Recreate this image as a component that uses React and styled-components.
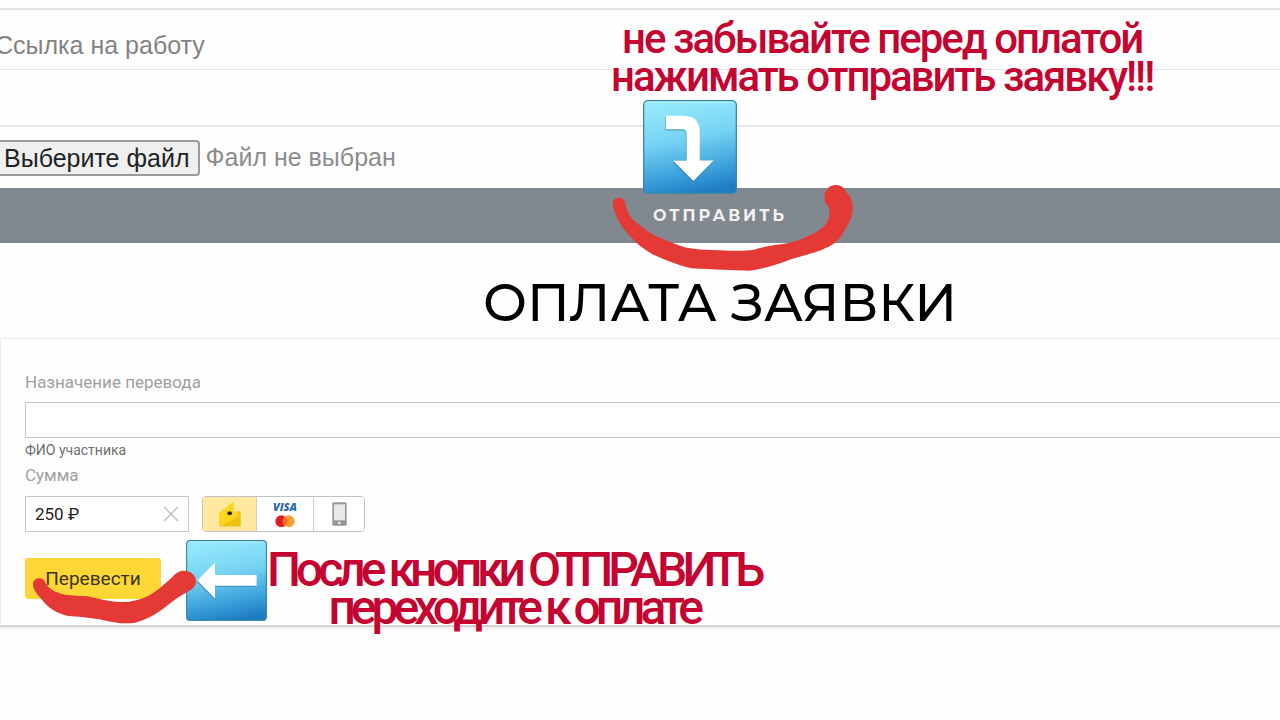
import React, { useState } from "react";
import styled, { createGlobalStyle } from "styled-components";

const GlobalStyle = createGlobalStyle`
  * {
    box-sizing: border-box;
  }

  body {
    margin: 0;
    background-color: #fefefe;
    font-family: "Liberation Sans", Arial, sans-serif;
    overflow-x: hidden;
  }
`;

const Page = styled.div`
  position: relative;
  overflow: hidden;
  padding: 8px 0 32px;
`;

// The form runs past the right edge of the window
const Wide = styled.main`
  width: calc(100% + 160px);
`;

const RequestForm = styled.form`
  display: flex;
  flex-direction: column;
`;

const LinkInput = styled.input`
  width: 100%;
  height: 62px;
  margin: 0 0 55px -5px;
  padding: 12px 0 0;
  border: solid #e4e4e4;
  border-width: 2px 0 1px;
  background-color: transparent;
  font-family: inherit;
  font-size: 25px;
  outline: none;

  &::placeholder {
    color: #838383;
    opacity: 1;
  }
`;

const FileLabel = styled.label`
  display: flex;
  align-items: center;
  gap: 6px;
  height: 63px;
  margin-left: -5px;
  border-top: 2px solid #e8e8e8;
  font-size: 25px;
  color: #8c8c8c;
  cursor: pointer;
`;

const FileInput = styled.input`
  width: 1px;
  height: 1px;
  margin: 0 -8px 0 0;
  opacity: 0;
`;

const FileButton = styled.span`
  padding: 0 8px;
  border: 2px solid #9a9a9a;
  border-radius: 4px;
  background-color: #efefef;
  color: #222222;
  line-height: 32px;
`;

const SubmitButton = styled.button`
  height: 55px;
  border: none;
  background-color: #81888f;
  color: #f2f2f2;
  font-family: Montserrat, Inter, sans-serif;
  font-size: 16px;
  font-weight: 700;
  letter-spacing: 3px;
  cursor: pointer;
`;

const Title = styled.h1`
  margin: 0;
  padding: 28px 0 4px;
  font-family: Montserrat, Inter, sans-serif;
  font-size: 52px;
  font-weight: 500;
  line-height: 63px;
  text-align: center;
  color: #000000;
`;

const PaymentForm = styled.form`
  display: flex;
  flex-direction: column;
  padding: 31px 24px 26px;
  border: 1px solid #ececec;
  border-bottom: 2px solid #d4d4d4;
  box-shadow: 0 2px 3px rgba(0, 0, 0, 0.08);
`;

const FieldLabel = styled.label`
  font-family: Roboto, sans-serif;
  font-size: 17px;
  line-height: 24px;
  color: #a0a0a0;
`;

const PurposeInput = styled.input`
  width: 100%;
  height: 36px;
  margin-top: 8px;
  padding: 0 10px;
  border: 1px solid #c6c6c6;
  background-color: #ffffff;
  font-size: 16px;
`;

const Hint = styled.span`
  font-family: Roboto, sans-serif;
  font-size: 14px;
  line-height: 25px;
  color: #6e6e6e;
`;

const AmountRow = styled.div`
  display: flex;
  gap: 13px;
  margin-top: 9px;
`;

const AmountBox = styled.div`
  display: flex;
  align-items: center;
  width: 164px;
  height: 36px;
  padding: 0 9px;
  border: 1px solid #c6c6c6;
  background-color: #ffffff;
`;

const AmountInput = styled.input`
  flex: 1;
  min-width: 0;
  padding: 0;
  border: none;
  outline: none;
  background: none;
  font-family: Roboto, "DejaVu Sans", sans-serif;
  font-size: 17px;
  color: #222222;
`;

const ClearButton = styled.button`
  display: flex;
  padding: 0;
  border: none;
  background: none;
  cursor: pointer;
`;

const Methods = styled.div`
  display: flex;
  height: 36px;
  border: 1px solid #c2c2c2;
  border-radius: 4px;
  overflow: hidden;
`;

const MethodButton = styled.button`
  display: flex;
  align-items: center;
  justify-content: center;
  width: ${props => props.$width};
  padding: 0;
  border: none;
  border-left: ${props => (props.$first ? "none" : "1px solid #cfcfcf")};
  background-color: ${props => (props.$active ? "#ffe9a0" : "#ffffff")};
  cursor: pointer;
`;

const CardBrands = styled.span`
  display: flex;
  flex-direction: column;
  align-items: center;
  gap: 2px;
`;

const Visa = styled.span`
  font-family: "Open Sans", sans-serif;
  font-size: 11px;
  font-style: italic;
  font-weight: 800;
  line-height: 12px;
  color: #2c6ba8;
`;

const PayButton = styled.button`
  width: 136px;
  height: 41px;
  margin-top: 26px;
  padding: 0;
  border: none;
  border-radius: 3px;
  background-color: #fdd736;
  font-family: Roboto, sans-serif;
  font-size: 19px;
  color: #3b3413;
  cursor: pointer;
`;

const Overlay = styled.div`
  position: absolute;
  left: ${props => props.$left}px;
  top: ${props => props.$top}px;
  pointer-events: none;

  svg {
    display: block;
  }
`;

const Note = styled.p`
  margin: 0;
  font-family: Roboto, sans-serif;
  font-size: ${props => props.$size}px;
  font-weight: 500;
  letter-spacing: ${props => props.$tracking}px;
  line-height: 38px;
  text-align: center;
  white-space: nowrap;
  color: #c40331;
`;

const ArrowTile = ({ size, id, d }) => (
  <svg width={size} height={size} viewBox="0 0 280 280" aria-hidden="true">
    <defs>
      <linearGradient id={id} x1="0.4" y1="0" x2="0.6" y2="1">
        <stop offset="0" stopColor="#95e9fc" />
        <stop offset="0.4" stopColor="#76d3f3" />
        <stop offset="0.75" stopColor="#3ea3dc" />
        <stop offset="1" stopColor="#1e7cc4" />
      </linearGradient>
    </defs>
    <rect x="2" y="2" width="276" height="276" rx="12" fill={`url(#${id})`} stroke="#3f87a6" strokeWidth="4" />
    <path d="M12 7H268" stroke="#c5f4fd" strokeWidth="3" />
    <path d={d} fill="#2a6f96" opacity="0.55" transform="translate(-2 4)" />
    <path d={d} fill="#ffffff" />
  </svg>
);

const WalletIcon = () => (
  <svg width="22" height="26" viewBox="0 0 66 78" aria-hidden="true">
    <path d="M2 34L44 2V31H64V76H2Z" fill="#fad02c" />
    <path d="M2 36V76H64V31L58 50L30 66Z" fill="#e9b90c" />
    <path d="M2 36L44 3V50L10 76H2Z" fill="#fcd51f" />
    <path d="M8 74L54 50L60 31H64V76Z" fill="#efc20f" />
    <ellipse cx="32" cy="37" rx="7" ry="6" fill="#2b2413" />
  </svg>
);

const CirclesIcon = () => (
  <svg width="20" height="13" viewBox="0 0 60 39" aria-hidden="true">
    <circle cx="19" cy="19" r="18" fill="#df1f26" />
    <circle cx="41" cy="19" r="18" fill="#f8a132" />
    <path d="M30 5A18 18 0 0 1 30 33A18 18 0 0 1 30 5Z" fill="#f26522" />
  </svg>
);

const PhoneIcon = () => (
  <svg width="15" height="24" viewBox="0 0 45 72" aria-hidden="true">
    <rect x="1" y="1" width="43" height="70" rx="4" fill="#969696" />
    <rect x="6" y="7" width="33" height="48" fill="#e9e9e9" />
    <circle cx="22" cy="63" r="4" fill="#f2f2f2" />
  </svg>
);

const CrossIcon = () => (
  <svg width="16" height="16" viewBox="0 0 16 16" aria-hidden="true">
    <path d="M1 1L15 15M15 1L1 15" stroke="#bdbdbd" strokeWidth="1.4" />
  </svg>
);

const App = () => {
  const [link, setLink] = useState("");
  const [fileName, setFileName] = useState("Файл не выбран");
  const [purpose, setPurpose] = useState("");
  const [amount, setAmount] = useState("250 ₽");
  const [method, setMethod] = useState("wallet");

  const handleSubmit = event => event.preventDefault();

  const handleFile = event => {
    const file = event.target.files[0];
    setFileName(file ? file.name : "Файл не выбран");
  };

  return (
    <Page>
      <GlobalStyle />
      <Wide>
        <RequestForm onSubmit={handleSubmit}>
          <LinkInput
            aria-label="Ссылка на работу"
            placeholder="Ссылка на работу"
            value={link}
            onChange={e => setLink(e.target.value)}
          />
          <FileLabel>
            <FileInput type="file" onChange={handleFile} />
            <FileButton>Выберите файл</FileButton>
            <span>{fileName}</span>
          </FileLabel>
          <SubmitButton type="submit">ОТПРАВИТЬ</SubmitButton>
        </RequestForm>

        <Title>ОПЛАТА ЗАЯВКИ</Title>

        <PaymentForm onSubmit={handleSubmit}>
          <FieldLabel htmlFor="purpose">Назначение перевода</FieldLabel>
          <PurposeInput id="purpose" value={purpose} onChange={e => setPurpose(e.target.value)} />
          <Hint>ФИО участника</Hint>
          <FieldLabel htmlFor="amount">Сумма</FieldLabel>
          <AmountRow>
            <AmountBox>
              <AmountInput id="amount" value={amount} onChange={e => setAmount(e.target.value)} />
              <ClearButton type="button" aria-label="Очистить" onClick={() => setAmount("")}>
                <CrossIcon />
              </ClearButton>
            </AmountBox>
            <Methods>
              <MethodButton
                type="button"
                aria-label="Кошелёк"
                $first
                $width="53px"
                $active={method === "wallet"}
                onClick={() => setMethod("wallet")}
              >
                <WalletIcon />
              </MethodButton>
              <MethodButton
                type="button"
                $width="57px"
                $active={method === "card"}
                onClick={() => setMethod("card")}
              >
                <CardBrands>
                  <Visa>VISA</Visa>
                  <CirclesIcon />
                </CardBrands>
              </MethodButton>
              <MethodButton
                type="button"
                aria-label="Телефон"
                $width="51px"
                $active={method === "phone"}
                onClick={() => setMethod("phone")}
              >
                <PhoneIcon />
              </MethodButton>
            </Methods>
          </AmountRow>
          <PayButton type="submit">Перевести</PayButton>
        </PaymentForm>
      </Wide>

      <Overlay $left={611} $top={20}>
        <Note $size={42} $tracking={-2}>
          не забывайте перед оплатой
          <br />
          нажимать отправить заявку!!!
        </Note>
      </Overlay>
      <Overlay $left={643} $top={100}>
        <ArrowTile
          size={94}
          id="tile-down"
          d="M68 47H123Q169 49 169 95V180H210L150 241L90 181H130V100Q130 87 116 87H68Z"
        />
      </Overlay>
      <Overlay $left={610} $top={182}>
        <svg width="246" height="90" viewBox="30 546 738 270" aria-hidden="true">
          <path
            d="M38 612C36 600 46 594 57 594C68 594 75 600 76 612C82 640 92 655 110 668C130 685 150 699 172 710C205 722 235 738 270 745C310 752 350 750 390 752C415 752 440 753 462 749C495 738 530 735 562 730C595 722 625 710 650 695C668 684 682 672 686 655C690 640 689 630 686 621C676 612 672 598 674 583C680 564 692 555 707 555C722 555 733 562 739 577C752 590 757 602 758 625C758 645 752 660 743 675C730 700 715 725 690 738C665 752 620 765 575 777C535 792 490 808 450 812C400 812 340 808 275 805C230 795 195 778 160 764C125 745 100 722 80 697C60 675 44 645 38 612Z"
            fill="#e53935"
          />
        </svg>
      </Overlay>
      <Overlay $left={186} $top={540}>
        <ArrowTile size={81} id="tile-left" d="M39 140L100 79V121H244V158H100V202Z" />
      </Overlay>
      <Overlay $left={30} $top={568}>
        <svg width="168" height="57" viewBox="90 264 504 171" aria-hidden="true">
          <path
            d="M99 315C99 302 106 295 118 295C129 295 135 303 138 312C146 325 162 336 190 343C220 349 245 347 270 350C300 357 335 366 365 366C390 367 415 360 440 350C470 335 492 313 515 293C526 280 537 272 552 272C574 273 588 287 588 304C588 320 575 330 558 338C535 350 515 366 495 382C470 402 435 422 405 428C380 432 350 430 325 424C290 415 250 411 205 408C170 400 145 383 128 362C113 345 100 330 99 315Z"
            fill="#e53935"
          />
        </svg>
      </Overlay>
      <Overlay $left={267} $top={551}>
        <Note $size={48} $tracking={-5}>
          После кнопки ОТПРАВИТЬ
          <br />
          переходите к оплате
        </Note>
      </Overlay>
    </Page>
  );
};

export default App;
